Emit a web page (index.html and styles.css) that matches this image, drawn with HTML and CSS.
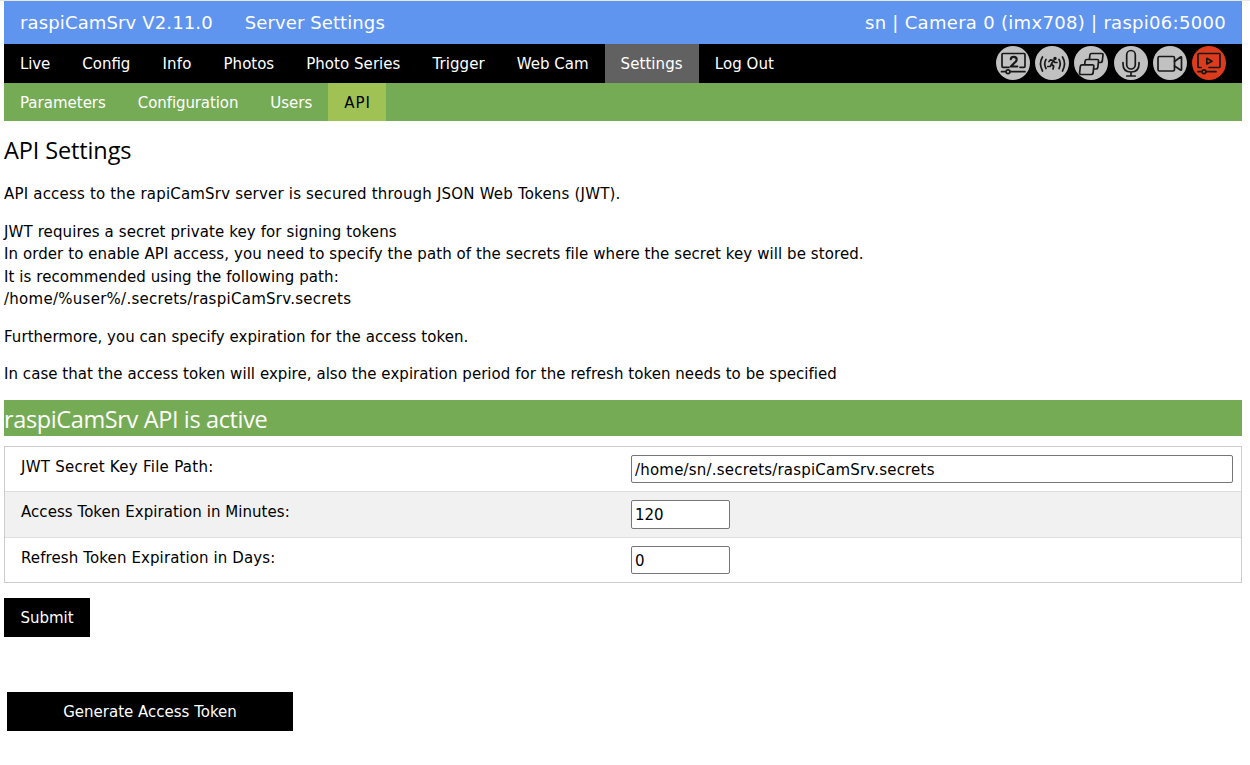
FILE: index.html
```html
<!DOCTYPE html>
<html lang="en">
<head>
<meta charset="utf-8">
<title>raspiCamSrv</title>
<link rel="stylesheet" href="styles.css">
</head>
<body>
<header class="titlebar">
  <div class="titles"><span class="t-app">raspiCamSrv V2.11.0</span><span class="t-page">Server Settings</span></div>
  <span class="t-host">sn | Camera 0 (imx708) | raspi06:5000</span>
</header>
<nav class="mainnav">
  <a class="close">Live</a><a>Config</a><a class="ls30">Info</a><a>Photos</a><a class="ls05">Photo Series</a><a class="ls08">Trigger</a><a>Web Cam</a><a class="current ls08">Settings</a><a class="ls08">Log Out</a>
  <div class="status">
    <svg viewBox="0 0 34 34"><circle class="disc" cx="17" cy="17" r="17"/><path d="M13 21.300H7Q6 21.300 6 20.300V8.500Q6 7.500 7 7.500H28Q29 7.500 29 8.500V20.300Q29 21.300 28 21.300H24M5.500 25.700H10M14 25.700H29"/><circle cx="12" cy="25.700" r="1.900"/><path class="thick" d="M14.800 13.200Q15 10.800 17.800 10.800Q20.700 10.800 20.700 13.400Q20.700 15 18.300 17L14.800 20.500H21.300"/></svg>
    <svg viewBox="0 0 34 34"><circle class="disc" cx="17" cy="17" r="17"/><path d="M7.500 11Q3.500 17.500 7.500 25M11 13.500Q8.500 17.500 11 22.500M27.500 11Q31.500 17.500 27.500 25M24 13.500Q26.500 17.500 24 22.500"/><circle class="fill" cx="20" cy="12.500" r=".9"/><path d="M14 15.500L15.500 13.800L18.500 14.500L16.300 18.300L18.700 20L18 23M16.300 18.300L15.300 20.500H12.800M18.500 14.500L19.800 16.500H22"/></svg>
    <svg viewBox="0 0 34 34"><circle class="disc" cx="17" cy="17" r="17"/><g class="window"><path d="M17.500 7.500H27.500Q29.200 7.500 29 9L28.300 15Q28 16.500 26.500 16.500H16.500Q15 16.500 15.200 15L15.900 9Q16 7.500 17.500 7.500Z"/><path d="M13 13.500H23Q24.700 13.500 24.500 15L23.800 21.500Q23.500 23 22 23H12Q10.200 23 10.400 21.500L11.100 15Q11.300 13.500 13 13.500Z"/><path d="M8.200 18.800H18.200Q20 18.800 19.800 20.300L19.100 27Q18.800 28.500 17.300 28.500H7.200Q5.400 28.500 5.600 27L6.300 20.300Q6.500 18.800 8.200 18.800Z"/></g></svg>
    <svg viewBox="0 0 34 34"><circle class="disc" cx="17" cy="17" r="17"/><rect x="12.700" y="4.500" width="8.600" height="18.500" rx="4.300"/><path d="M9 16.500V18Q9 26 17 26Q25 26 25 18V16.500M17 26V30M12.800 30H21.200"/></svg>
    <svg viewBox="0 0 34 34"><circle class="disc" cx="17" cy="17" r="17"/><rect x="5" y="10.500" width="16.500" height="14.500" rx="1.500"/><path d="M21.500 15.500L27.500 11Q28.500 10.500 28.500 11.500V23.500Q28.500 24.500 27.500 24L21.500 20"/></svg>
    <svg viewBox="0 0 34 34"><circle class="disc live" cx="17" cy="17" r="17"/><path d="M9 21.500H7Q6 21.500 6 20.500V8.500Q6 7.500 7 7.500H27Q28 7.500 28 8.500V20.500Q28 21.500 27 21.500H17M6 25.700H10M14 25.700H24M14.800 12.300V18L20 15.200Z"/><circle cx="12" cy="25.700" r="1.900"/></svg>
  </div>
</nav>
<nav class="subnav"><a>Parameters</a><a class="close">Configuration</a><a>Users</a><a class="current">API</a></nav>
<main>
  <h3>API Settings</h3>
  <p><span class="ls19">API access to the rapiCamSrv server is secured through JSON Web Tokens (JWT).</span></p>
  <p><span class="ls11">JWT requires a secret private key for signing tokens</span><br><span class="ls08">In order to enable API access, you need to specify the path of the secrets file where the secret key will be stored.</span><br><span class="ls08">It is recommended using the following path:</span><br><span class="ls27">/home/%user%/.secrets/raspiCamSrv.secrets</span></p>
  <p><span class="ls05">Furthermore, you can specify expiration for the access token.</span></p>
  <p><span class="ls05">In case that the access token will expire, also the expiration period for the refresh token needs to be specified</span></p>
  <h3 class="banner">raspiCamSrv API is active</h3>
  <form>
    <div class="table">
      <div class="row"><label class="ls27">JWT Secret Key File Path:</label><input class="path" type="text" value="/home/sn/.secrets/raspiCamSrv.secrets"></div>
      <div class="row alt"><label class="ls05">Access Token Expiration in Minutes:</label><input type="text" value="120"></div>
      <div class="row"><label class="ls11">Refresh Token Expiration in Days:</label><input type="text" value="0"></div>
    </div>
    <button type="button" class="submit">Submit</button>
    <button type="button" class="generate">Generate Access Token</button>
  </form>
</main>
</body>
</html>
```
FILE: styles.css
```css
* { box-sizing: border-box; }
body { margin: 0; padding: 0 8px 0 4px; border-top: 1px solid #e8e8e8; background: #fff; color: #000; font: 15px/22.5px "DejaVu Sans", Verdana, sans-serif; }
.titlebar { display: flex; justify-content: space-between; height: 43px; padding: 8px 16px; background: #6095ef; color: #fff; font-size: 18px; line-height: 27px; white-space: pre; }
.titles { display: flex; gap: 32px; }
.t-app { letter-spacing: .14px; }
.t-page { letter-spacing: .1px; }
.t-host { letter-spacing: .3px; }
.mainnav, .subnav { display: flex; color: #fff; white-space: nowrap; }
.mainnav { height: 39px; background: #000; }
.subnav { height: 38px; background: #76ab55; }
.mainnav a, .subnav a { padding: 9px 16px 0; }
.mainnav .current { background: #616161; }
.subnav .current { padding: 9px 15.500px 0 16px; background: #a0c154; color: #000; letter-spacing: .9px; }
.close { letter-spacing: -.1px; }
.ls05 { letter-spacing: .05px; }
.ls08 { letter-spacing: .08px; }
.ls11 { letter-spacing: .11px; }
.ls19 { letter-spacing: .19px; }
.ls27 { letter-spacing: .27px; }
.ls30 { letter-spacing: .2px; }
.status { display: flex; gap: 5.200px; margin-left: auto; padding: 2px 16px 0 0; }
.status svg { width: 34px; height: 34px; fill: none; stroke: #181818; stroke-width: 1.700; stroke-linecap: round; stroke-linejoin: round; }
.status .disc { fill: #c1c1c1; stroke: none; }
.status .live { fill: #dc3c1b; }
.status .thick { stroke-width: 2.200; }
.status .fill { fill: #181818; }
.status .window path { fill: #c1c1c1; }
h3 { height: 36px; margin: 10px 0 15px; padding-top: 1px; font: 23.5px/36px "Open Sans", "Noto Sans", sans-serif; letter-spacing: -.12px; }
p { margin: 14px 0; padding-top: 1px; white-space: nowrap; }
.banner { margin: 15px 0 10px; background: #76ab55; color: #fff; letter-spacing: -.37px; }
p + .banner { margin-top: 14px; }
.table { border: 1px solid #ccc; }
.row { display: grid; grid-template-columns: 610px 1fr; padding: 8px 8px 8px 16px; align-items: start; border-bottom: 1px solid #ddd; }
.row:last-child { border-bottom: 0; }
.alt { background: #f1f1f1; }
label { padding-top: 1px; }
input { width: 99px; height: 28px; padding: 3px 3px 1px; border: 1px solid #767676; border-radius: 2px; font: inherit; color: #000; }
.path { width: 100%; letter-spacing: .2px; }
.alt input { height: 29px; }
button { display: block; height: 39px; padding: 2px 0 0; border: 0; background: #000; color: #fff; font: inherit; }
.submit { width: 86px; margin-top: 15px; }
.generate { width: 286px; margin: 55px 0 0 3px; }
```
